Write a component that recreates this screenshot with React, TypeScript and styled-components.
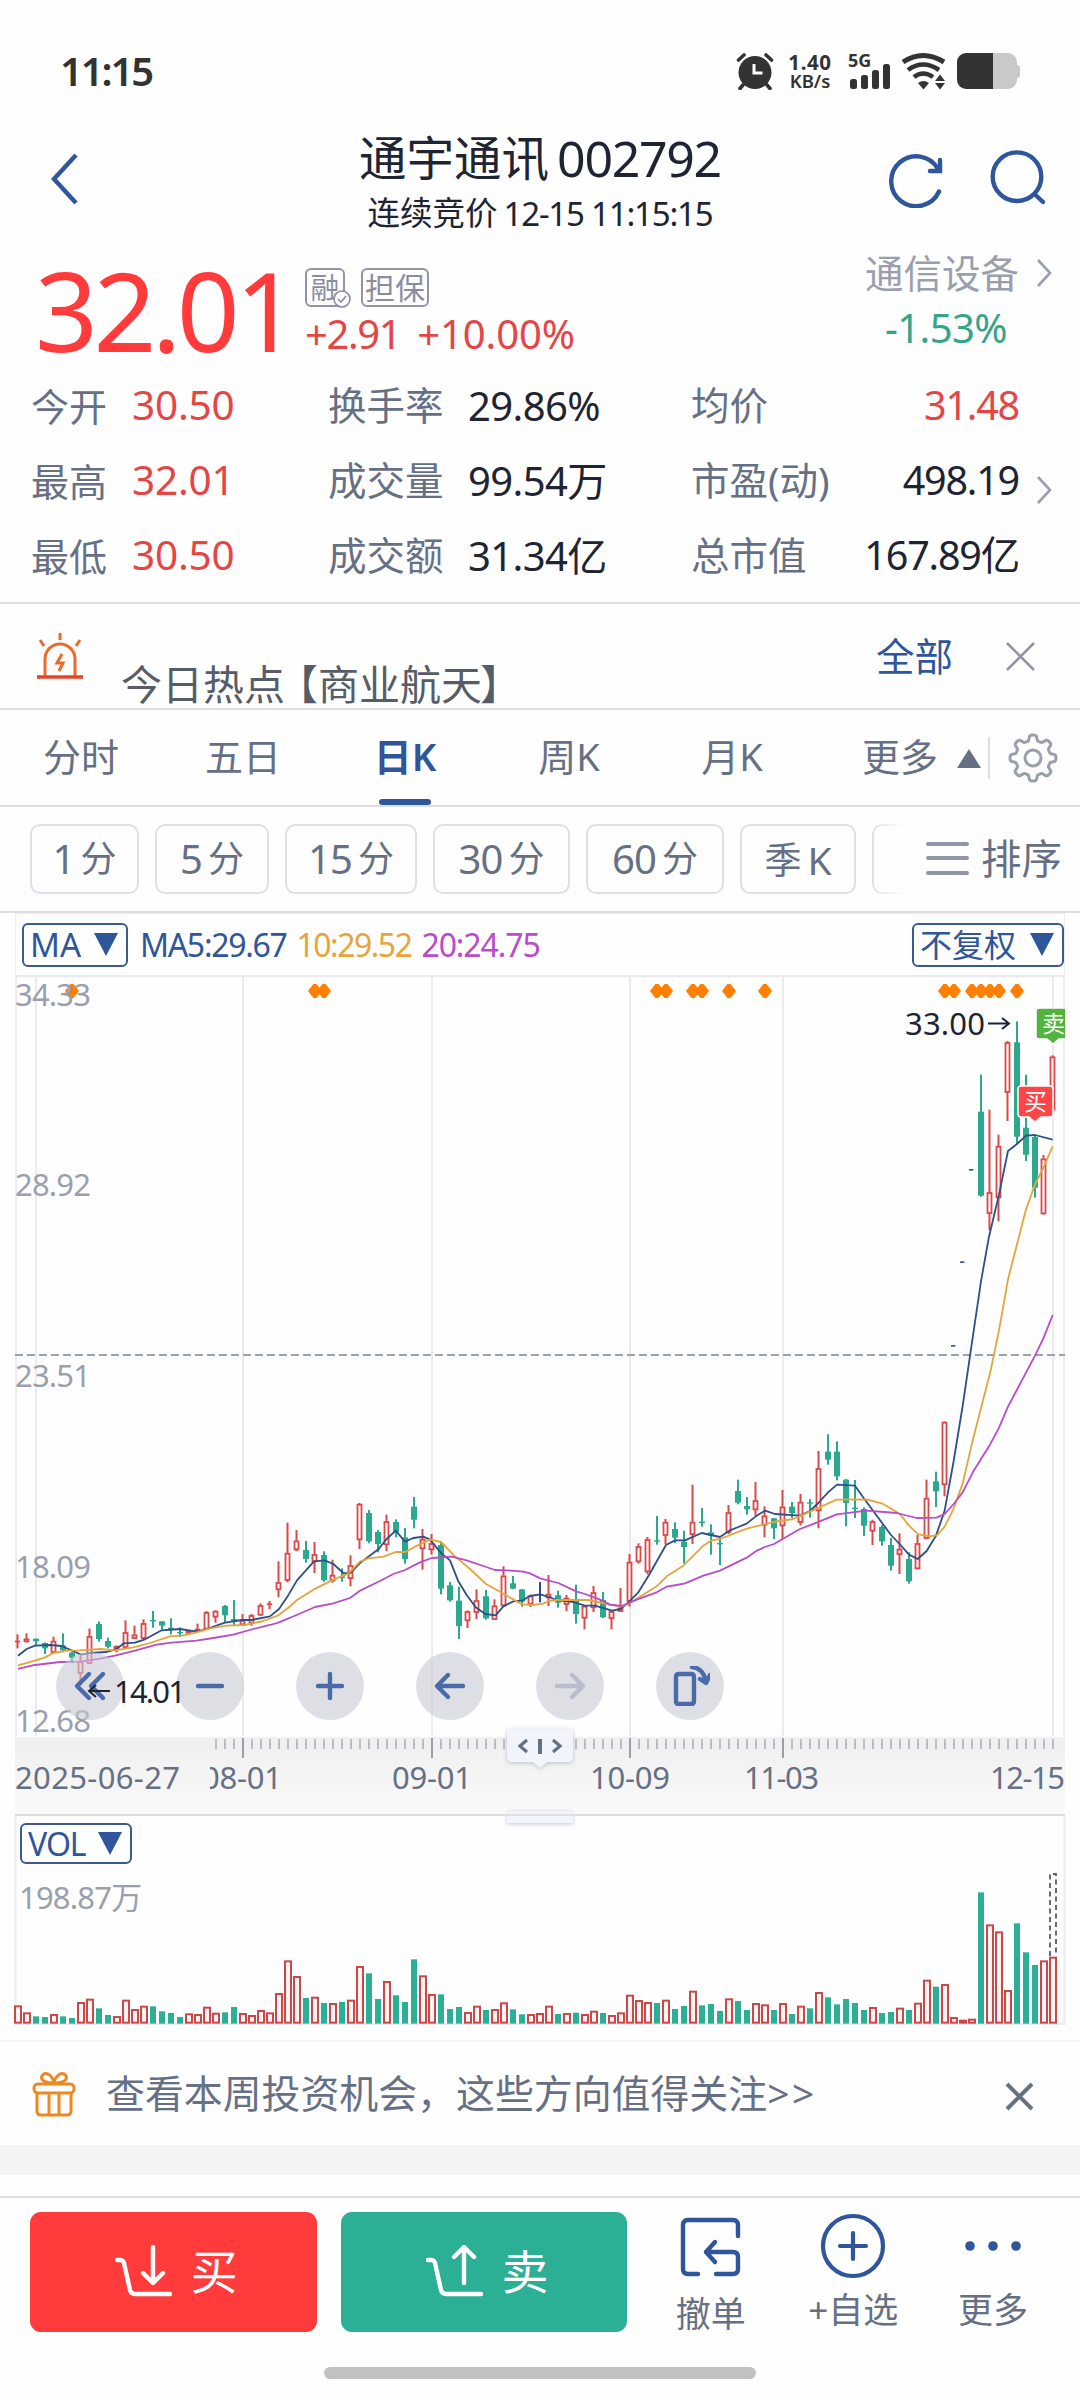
import React from "react";
import styled, { createGlobalStyle, css } from "styled-components";

const C = {
  ink: "#1f2433",
  label: "#667085",
  mute: "#9a9fae",
  blue: "#2f559b",
  red: "#e64545",
  hot: "#ff3b3b",
  green: "#2bb096",
  gold: "#e5a53a",
  violet: "#b84ccb",
  line: "#dcdee2",
  grid: "#ebebef",
};

const Global = createGlobalStyle`
  * { box-sizing: border-box; }
  body { margin: 0; background: #fff; }
`;

const Screen = styled.div`
  width: 1080px;
  height: 2400px;
  overflow: hidden;
  display: flex;
  flex-direction: column;
  background: #fefefe;
  color: ${C.ink};
  font-family: "Noto Sans", "Noto Sans CJK SC", sans-serif;
  line-height: 1;
  white-space: nowrap;
`;

const Txt = styled.span<{ $s: number; $c?: string; $ls?: number; $w?: number }>`
  display: block;
  font-size: ${(p) => p.$s}px;
  color: ${(p) => p.$c ?? "inherit"};
  letter-spacing: ${(p) => p.$ls ?? 0}px;
  font-weight: ${(p) => p.$w ?? 400};
  line-height: 1;
`;
const Tight = styled.span<{ $ls: number }>`
  letter-spacing: ${(p) => p.$ls}px;
`;

/* ---------- status bar ---------- */
const Status = styled.div`
  height: 110px;
  padding: 32px 60px 0 60px;
  display: flex;
  align-items: center;
  color: #333;
`;
const StatusIcons = styled.div`
  margin-left: auto;
  display: flex;
  align-items: center;
`;
const Speed = styled.div`
  width: 48px;
  margin: 0 14px 0 11px;
  display: flex;
  flex-direction: column;
  align-items: center;
`;
const Signal = styled.div`
  width: 44px;
  margin-right: 9px;
  height: 38px;
`;
const Battery = styled.div`
  display: flex;
  align-items: center;
  margin-left: 10px;
  &::before {
    content: "";
    width: 60px;
    height: 36px;
    border-radius: 9px;
    background: linear-gradient(90deg, #333 36px, #c9c9c9 36px);
  }
  &::after {
    content: "";
    width: 3px;
    height: 13px;
    border-radius: 0 3px 3px 0;
    background: #c9c9c9;
  }
`;

/* ---------- header ---------- */
const Header = styled.header`
  height: 138px;
  padding: 0 33px 0 33px;
  display: grid;
  grid-template-columns: 160px 1fr 160px;
  align-items: center;
`;
const Back = styled.div`
  padding-left: 17px;
`;
const TitleBlock = styled.div`
  display: flex;
  flex-direction: column;
  align-items: center;
  gap: 14px;
  padding-top: 5px;
`;
const Inline = styled.div<{ $gap?: number }>`
  display: flex;
  align-items: center;
  gap: ${(p) => p.$gap ?? 0}px;
`;
const HeaderActions = styled.div`
  display: flex;
  justify-content: flex-end;
  align-items: center;
  gap: 44px;
`;

/* ---------- quote ---------- */
const Quote = styled.section`
  height: 120px;
  padding: 0 28px 0 35px;
  display: flex;
  align-items: flex-start;
`;
const Price = styled.div`
  width: 270px;
  padding-top: 6px;
`;
const ChangeBlock = styled.div`
  padding-top: 20px;
  display: flex;
  flex-direction: column;
  gap: 7px;
`;
const Badge = styled.div<{ $w: number }>`
  position: relative;
  width: ${(p) => p.$w}px;
  height: 39px;
  border: 2px solid #9394a8;
  border-radius: 6px;
  display: flex;
  align-items: center;
  justify-content: center;
`;
const BadgeCheck = styled.svg`
  position: absolute;
  right: -8px;
  bottom: -3px;
`;
const Sector = styled.div`
  margin-left: auto;
  padding-top: 6px;
  display: flex;
  flex-direction: column;
  gap: 15px;
`;
const SectorChange = styled.div`
  padding-left: 20px;
`;

/* ---------- statistics ---------- */
const Stats = styled.section`
  height: 236px;
  border-bottom: 2px solid ${C.line};
  padding-left: 31px;
  padding-right: 28px;
  display: grid;
  grid-template-columns: 101px 196px 140px 223px 328px 1fr;
  grid-template-rows: repeat(3, 75px);
  align-items: center;
`;
const Right = styled.div`
  display: flex;
  align-items: center;
  justify-content: space-between;
`;
const RowArrow = styled.div`
  display: flex;
  justify-content: flex-end;
  padding-top: 18px;
`;

/* ---------- alert ---------- */
const Alert = styled.section`
  height: 106px;
  border-bottom: 2px solid ${C.line};
  padding: 0 45px 0 36px;
  display: flex;
  align-items: center;
`;
const AlertText = styled.div`
  margin: 66px 0 0 37px;
  height: 50px;
`;
const AlertEnd = styled.div`
  margin-left: auto;
  display: flex;
  align-items: center;
  gap: 53px;
`;

/* ---------- tabs ---------- */
const Tabs = styled.nav`
  height: 97px;
  border-bottom: 2px solid ${C.line};
  display: grid;
  grid-template-columns: 162px 162px 162px 166px 160px 176px 1fr;
  align-items: stretch;
`;
const Tab = styled.div<{ $on?: boolean; $end?: boolean }>`
  display: flex;
  justify-content: ${(p) => (p.$end ? "flex-end" : "center")};
  align-items: center;
  gap: 19px;
  padding: 0 ${(p) => (p.$end ? 7 : 0)}px 3px 0;
  font-size: 38px;
  color: ${(p) => (p.$on ? C.blue : C.label)};
  font-weight: ${(p) => (p.$on ? 600 : 400)};
  ${(p) =>
    p.$on &&
    css`
      flex-direction: column;
      justify-content: flex-end;
      gap: 24px;
      padding: 0;
      &::after {
        content: "";
        width: 52px;
        height: 6px;
        border-radius: 3px;
        background: ${C.blue};
      }
    `}
`;
const GearCell = styled.div`
  display: flex;
  align-items: center;
  &::before {
    content: "";
    width: 2px;
    height: 42px;
    background: ${C.line};
    margin-right: 18px;
  }
`;

/* ---------- periods ---------- */
const Periods = styled.div`
  height: 106px;
  border-bottom: 2px solid ${C.line};
  padding-left: 30px;
  display: flex;
  align-items: center;
  gap: 16px;
`;
const Chip = styled.div<{ $w: number }>`
  flex: none;
  width: ${(p) => p.$w}px;
  height: 70px;
  border: 2px solid #dfe0e5;
  border-radius: 10px;
  display: flex;
  align-items: center;
  justify-content: center;
  gap: 6px;
  color: ${C.label};
`;
const FadedChip = styled.div`
  width: 32px;
  height: 70px;
  overflow: hidden;
  border: 2px solid #dfe0e5;
  border-right: 0;
  border-radius: 10px 0 0 10px;
  mask-image: linear-gradient(90deg, #000, transparent);
`;
const Sort = styled.div`
  margin-left: 6px;
  display: flex;
  align-items: center;
  gap: 12px;
`;

/* ---------- chart ---------- */
const ChartHead = styled.div`
  height: 62px;
  margin: 0 15px;
  padding: 0 0 0 6px;
  border: 1px solid ${C.grid};
  border-bottom: 0;
  display: flex;
  align-items: center;
`;
const Select = styled.div<{ $w: number; $h: number }>`
  width: ${(p) => p.$w}px;
  height: ${(p) => p.$h}px;
  border: 2px solid #3c5a8c;
  border-radius: 6px;
  padding: 0 8px 0 6px;
  display: flex;
  align-items: center;
  justify-content: space-between;
  color: ${C.blue};
`;
const Averages = styled.div`
  margin: 0 auto 0 12px;
  display: flex;
  gap: 10px;
`;
const Plot = styled.div`
  position: relative;
  height: 762px;
  & > svg {
    display: block;
  }
`;
const Controls = styled.div`
  position: absolute;
  left: 56px;
  top: 677px;
  display: flex;
  gap: 52px;
`;
const Round = styled.div`
  width: 68px;
  height: 68px;
  border-radius: 50%;
  background: rgba(200, 202, 212, 0.6);
  display: flex;
  align-items: center;
  justify-content: center;
`;
const PriceTag = styled.div<{ $x: number; $y: number; $w: number }>`
  position: absolute;
  left: ${(p) => p.$x}px;
  top: ${(p) => p.$y}px;
  width: ${(p) => p.$w}px;
  overflow: hidden;
`;
const TagSvg = styled.svg`
  display: block;
`;
const Axis = styled.div`
  position: relative;
  height: 77px;
  margin: 0 15px;
  background: linear-gradient(#efefef, #fafafa);
  & > svg {
    display: block;
  }
`;
const Handle = styled.svg`
  position: absolute;
  left: 485px;
  top: -14px;
`;
const VolumeBox = styled.div`
  position: relative;
  height: 226px;
  margin: 0 15px;
  border-top: 2px solid ${C.line};
`;
const VolumeHead = styled.div`
  height: 60px;
  padding: 7px 0 0 5px;
`;
const VolumeLabel = styled.div`
  padding: 6px 0 0 4px;
`;
const VolumeSvg = styled.svg`
  position: absolute;
  left: -15px;
  top: 0;
`;

/* ---------- promo & footer ---------- */
const Promo = styled.div`
  height: 105px;
  border-top: 2px solid #f3f3f5;
  padding: 0 46px 0 32px;
  display: flex;
  align-items: center;
`;
const PromoText = styled.div`
  margin: 0 auto 0 30px;
`;
const PromoClose = styled.svg`
  margin-top: 6px;
`;
const Band = styled.div`
  height: 30px;
  background: #f3f4f6;
`;
const Footer = styled.footer`
  margin-top: 21px;
  border-top: 2px solid ${C.line};
  height: 170px;
  padding: 14px 30px 0;
  display: flex;
  align-items: flex-start;
`;
const Trade = styled.button<{ $bg: string }>`
  width: 287px;
  height: 120px;
  border: 0;
  padding: 0 0 1px 6px;
  margin-right: 24px;
  border-radius: 11px;
  background: ${(p) => p.$bg};
  color: #fff;
  font-family: inherit;
  display: flex;
  align-items: center;
  justify-content: center;
  gap: 18px;
`;
const Action = styled.div<{ $w: number; $t?: number }>`
  width: ${(p) => p.$w}px;
  display: flex;
  flex-direction: column;
  align-items: center;
  gap: ${(p) => p.$t ?? 13}px;
`;
const HomeBar = styled.div`
  width: 432px;
  height: 12px;
  border-radius: 6px;
  background: #c1c1c1;
  margin: 1px auto 0;
`;

/* Candles: colour, high, body top, body bottom, low, in thirds of a pixel. */
type Candle = [string, number, number, number, number];
const candles: Candle[] = [
  ["r", 466, 485, 489, 508], ["r", 463, 479, 488, 490], ["g", 479, 479, 487, 500], ["g", 490, 492, 508, 525],
  ["r", 473, 486, 520, 522], ["g", 463, 499, 514, 520], ["g", 518, 521, 536, 552], ["r", 530, 547, 583, 620],
  ["r", 449, 472, 553, 555], ["g", 427, 435, 480, 488], ["g", 476, 486, 503, 508], ["r", 500, 501, 509, 520],
  ["r", 424, 460, 505, 507], ["r", 440, 467, 478, 480], ["r", 421, 433, 478, 480], ["g", 396, 423, 427, 446],
  ["g", 427, 427, 440, 452], ["g", 418, 446, 452, 466], ["g", 445, 459, 463, 474], ["r", 454, 456, 462, 466],
  ["r", 434, 450, 456, 458], ["r", 396, 400, 450, 452], ["r", 394, 396, 414, 431], ["g", 378, 381, 409, 430],
  ["g", 363, 420, 428, 438], ["r", 405, 424, 437, 440], ["r", 405, 409, 432, 440], ["r", 373, 379, 408, 410],
  ["r", 366, 373, 377, 391], ["r", 247, 310, 332, 355], ["r", 131, 222, 304, 310], ["r", 153, 185, 212, 217],
  ["g", 186, 213, 240, 251], ["r", 189, 226, 248, 282], ["g", 217, 228, 304, 308], ["r", 242, 288, 305, 311],
  ["g", 268, 292, 297, 308], ["r", 229, 259, 298, 322], ["r", 72, 75, 182, 210], ["g", 93, 102, 187, 193],
  ["g", 153, 159, 195, 220], ["r", 107, 127, 197, 216], ["g", 121, 129, 159, 175], ["g", 147, 175, 240, 254],
  ["g", 54, 83, 122, 148], ["r", 150, 180, 209, 272], ["r", 165, 193, 212, 227], ["g", 190, 198, 329, 346],
  ["g", 309, 319, 364, 368], ["g", 323, 365, 441, 480], ["r", 394, 397, 425, 447], ["r", 331, 364, 400, 420],
  ["g", 333, 352, 418, 422], ["r", 361, 380, 421, 423], ["r", 262, 290, 380, 382], ["g", 291, 313, 329, 330],
  ["g", 330, 331, 368, 383], ["r", 347, 350, 375, 384], ["b", 309, 345, 349, 370], ["r", 288, 345, 356, 381],
  ["g", 335, 349, 371, 386], ["r", 348, 357, 376, 396], ["g", 317, 365, 405, 434], ["r", 378, 381, 417, 451],
  ["r", 321, 340, 386, 399], ["g", 339, 363, 415, 417], ["r", 395, 397, 418, 451], ["r", 327, 386, 397, 399],
  ["r", 225, 249, 367, 383], ["r", 193, 202, 248, 254], ["r", 174, 181, 278, 286], ["g", 111, 184, 188, 197],
  ["r", 120, 129, 169, 196], ["g", 130, 150, 176, 192], ["g", 155, 188, 204, 254], ["r", 17, 129, 166, 195],
  ["g", 87, 128, 132, 143], ["g", 136, 160, 170, 227], ["g", 180, 192, 196, 258], ["r", 78, 100, 160, 165],
  ["g", 2, 36, 71, 76], ["g", 54, 81, 91, 107], ["r", 9, 64, 92, 110], ["r", 82, 110, 138, 175],
  ["g", 117, 118, 148, 180], ["r", 33, 83, 140, 180], ["g", 69, 83, 102, 117], ["r", 45, 69, 130, 139],
  ["g", 60, 70, 74, 116], ["r", -84, -32, 95, 148], ["g", -134, -82, -58, -43], ["g", -113, -82, -8, 4],
  ["g", 0, 2, 72, 142], ["g", 3, 86, 90, 117], ["g", 85, 90, 140, 171], ["r", 122, 127, 156, 198],
  ["g", 138, 144, 187, 200], ["g", 177, 198, 260, 275], ["r", 163, 210, 226, 285], ["g", 220, 240, 307, 314],
  ["r", 167, 193, 269, 271], ["r", 2, 57, 178, 180], ["g", -22, 7, 37, 84], ["r", -173, -171, 17, 52],
  ["d", -399, -399, -399, -399], ["d", -650, -650, -650, -650], ["d", -927, -927, -927, -927],
  ["g", -1213, -1102, -850, -847], ["r", -1108, -860, -797, -746], ["r", -1033, -999, -844, -773],
  ["r", -1314, -1310, -1160, -1074], ["g", -1373, -1310, -1027, -1005], ["g", -1213, -1054, -973, -954],
  ["g", -1033, -1026, -874, -844], ["r", -972, -961, -796, -793], ["r", -1271, -1267, -1107, -1105],
];

const ma5 =
  "54,530 80,510 105,500 150,498 185,501 243,527 270,522 320,519 348,511 372,493 405,491 435,481 485,454 540,450 590,458 620,450 675,431 725,423 755,423 810,412 837,390 864,350 891,304 942,247 974,244 1000,255 1030,282 1050,283 1080,252 1135,211 1160,180 1187,155 1215,188 1240,177 1270,173 1290,182 1325,224 1350,244 1375,307 1400,348 1427,385 1456,405 1487,409 1510,382 1540,367 1568,364 1590,351 1620,346 1647,354 1670,363 1720,369 1755,380 1785,380 1836,395 1862,390 1885,370 1915,340 1947,288 1998,198 2025,184 2055,184 2105,162 2160,174 2190,154 2215,144 2240,134 2270,110 2295,95 2325,105 2400,110 2430,96 2455,72 2484,40 2511,17 2565,20 2591,57 2673,168 2696,192 2727,227 2753,240 2780,216 2808,170 2834,95 2861,-54 2888,-219 2915,-403 2943,-593 2967,-727 2997,-853 3024,-984 3051,-1005 3078,-1030 3105,-1032 3158,-1018";
const ma10 =
  "54,559 105,545 135,535 160,522 200,515 240,514 300,510 345,514 400,505 450,492 510,472 545,470 590,460 630,448 680,440 735,438 790,426 835,409 864,387 891,363 940,332 1000,302 1045,284 1080,248 1105,238 1150,233 1187,219 1217,219 1245,203 1290,182 1323,189 1365,232 1410,270 1458,315 1500,338 1565,376 1600,378 1630,374 1645,366 1670,363 1765,363 1835,378 1865,382 1885,375 1970,322 2000,292 2050,260 2110,200 2135,184 2160,180 2240,149 2320,129 2380,120 2430,98 2510,62 2600,61 2645,73 2675,90 2700,105 2727,140 2755,166 2790,172 2812,168 2834,143 2861,89 2888,13 2915,-103 2943,-213 2970,-317 2997,-446 3024,-599 3078,-809 3105,-883 3131,-936 3158,-998";
const ma20 =
  "54,570 105,558 180,549 240,548 300,539 345,530 405,515 470,497 515,491 590,485 640,477 700,467 760,450 810,438 837,430 890,408 945,384 1000,373 1050,357 1080,335 1140,306 1180,285 1215,273 1260,250 1295,237 1355,233 1400,244 1450,261 1485,273 1520,274 1570,278 1590,283 1620,298 1675,312 1730,338 1755,345 1800,362 1830,377 1865,381 1910,362 1970,340 2000,323 2030,318 2055,313 2110,290 2160,275 2240,236 2270,215 2295,204 2322,195 2400,150 2450,131 2510,106 2600,95 2690,102 2750,117 2810,116 2834,105 2861,75 2888,40 2920,-23 2970,-103 2997,-154 3024,-217 3080,-323 3105,-370 3131,-424 3158,-492";

/* Volume bar tops in thirds of a pixel below the panel top; the base is 672. */
const volumes =
  "r620 r641 g652 g654 r646 g652 g657 r610 r600 g628 g648 r652 r603 r631 r621 g622 g637 g642 g654 r644 r646 r624 r642 g640 g624 r643 r649 r634 r641 r583 r485 r532 g597 r594 g612 r613 g609 r603 r502 g523 g600 r547 g589 g609 g481 r530 r586 g586 g630 g624 r640 r621 g633 r631 r611 g631 g646 r646 r643 r621 g645 r643 g641 r646 r636 g642 r649 r641 r588 r604 r610 g612 r603 g630 g621 r576 g619 g615 g636 r599 g606 g633 r613 r617 g633 r613 g645 r621 g628 r580 g595 g616 g600 g612 g633 r625 g642 g639 r627 g633 r612 r543 g563 r556 r655 r663 r660 g280 r377 r398 r574 g373 g460 g498 r485 r474".split(
    " "
  );

const months = [243, 432, 630, 783];
const eventDays = [6, 33, 34, 71, 72, 75, 76, 79, 83, 103, 104, 106, 107, 108, 109, 111];
const scaleLabels: [string, number][] = [
  ["34.33", 31], ["28.92", 221], ["23.51", 412], ["18.09", 603], ["12.68", 757],
];
const dates: [string, number][] = [
  ["09-01", 392], ["10-09", 590], ["11-03", 744], ["12-15", 990],
];
const svgText = { fontFamily: '"Noto Sans", sans-serif' };

const CandleMark = ({ c, i }: { c: Candle; i: number }) => {
  const [k, hi, top, bot, lo] = c;
  const x = 54 + 27 * i;
  if (k === "d") return <rect x={x - 9} y={hi - 3} width={13} height={5} fill={C.blue} />;
  if (k === "r") {
    const rx = x - 1.5;
    if (bot - top < 6)
      return (
        <g fill={C.red}>
          <rect x={rx - 3} y={hi} width={6} height={lo - hi} />
          <rect x={rx - 8} y={top} width={16} height={5} />
        </g>
      );
    return (
      <g fill="#dc4848">
        <rect x={rx - 3} y={hi} width={6} height={Math.max(0, top - hi)} />
        <rect x={rx - 3} y={bot} width={6} height={Math.max(0, lo - bot)} />
        <rect x={rx - 6} y={top + 2} width={12} height={Math.max(2, bot - top - 3)} fill="none" stroke="#dc4848" strokeWidth={5.4} />
      </g>
    );
  }
  const f = k === "b" ? "#2b4c83" : "#2aa98f";
  return (
    <g fill={f}>
      <rect x={x - 3} y={hi} width={6} height={lo - hi} />
      <rect x={x - 9} y={top} width={18} height={bot - top} />
    </g>
  );
};

const Chevron = () => (
  <svg width="15" height="28" viewBox="0 0 15 28" fill="none" stroke="#9a9fae" strokeWidth="2.6">
    <path d="M1 1 13 14 1 27" />
  </svg>
);
const Caret = ({ up, color = C.blue }: { up?: boolean; color?: string }) => (
  <svg width="24" height="24" viewBox="0 0 24 24">
    <path d={up ? "M12 5 24 24H0Z" : "M0 0H24L12 23Z"} fill={color} />
  </svg>
);
const TagShape = ({ fill, children }: { fill: string; children: string }) => (
  <TagSvg width="37" height="40" viewBox="0 0 37 40">
    <path d="M4 1H33Q36 1 36 4V29Q36 32 33 32H24L18 37 12 32H4Q1 32 1 29V4Q1 1 4 1Z" fill={fill} stroke="#fff" strokeWidth="1.5" />
    <text x="18.5" y="25" fontSize="23" textAnchor="middle" fill="#fff" fontFamily='"Noto Sans CJK SC", sans-serif'>
      {children}
    </text>
  </TagSvg>
);

const Stroke = ({ d, color = "#4a6ba8" }: { d: string; color?: string }) => (
  <svg width="40" height="40" viewBox="0 0 40 40" fill="none" stroke={color} strokeWidth="4.4" strokeLinecap="round" strokeLinejoin="round">
    <path d={d} />
  </svg>
);

const gearPath = (() => {
  const pts: string[] = [];
  for (let a = 0; a <= 360; a += 3) {
    const t = (a * Math.PI) / 180;
    const w = Math.cos(8 * t);
    const r = 20.2 + 2.8 * Math.tanh(2.4 * w);
    pts.push(`${(25 + r * Math.sin(t)).toFixed(2)} ${(25 - r * Math.cos(t)).toFixed(2)}`);
  }
  return "M" + pts.join("L") + "Z";
})();

const stats: [string, string, string, string, string, string][] = [
  ["今开", "30.50", "换手率", "29.86%", "均价", "31.48"],
  ["最高", "32.01", "成交量", "99.54万", "市盈(动)", "498.19"],
  ["最低", "30.50", "成交额", "31.34亿", "总市值", "167.89亿"],
];
const chips: [string, string, number][] = [
  ["1", "分", 109], ["5", "分", 114], ["15", "分", 132], ["30", "分", 137], ["60", "分", 138],
];

export default function App() {
  return (
    <Screen>
      <Global />
      <Status>
        <Txt $s={40} $w={600} $ls={-2.1}>11:15</Txt>
        <StatusIcons>
          <svg width="40" height="38" viewBox="0 0 40 38">
            <circle cx="20" cy="20.5" r="16.5" fill="#333" />
            <path d="M3.500 8 9 3M36.500 8 31 3M8 33 5 36.500M32 33 35 36.500" stroke="#333" strokeWidth="3.6" strokeLinecap="round" />
            <path d="M19 12V21H27.500" fill="none" stroke="#fff" strokeWidth="3" />
          </svg>
          <Speed>
            <Txt $s={20.5} $w={700} $ls={0.6}>1.40</Txt>
            <Txt $s={18.5} $w={600}>KB/s</Txt>
          </Speed>
          <Signal>
            <svg width="44" height="38" viewBox="0 0 44 38">
              <text x="0" y="15" fontSize="18" fontWeight="700" fill="#333" style={svgText}>5G</text>
              <g fill="#333">
                <rect x="2" y="27" width="7" height="10" rx="2.5" />
                <rect x="13" y="23" width="7" height="14" rx="2.5" />
                <rect x="24" y="18" width="7" height="19" rx="2.5" />
                <rect x="35" y="12" width="7" height="25" rx="2.5" />
              </g>
            </svg>
          </Signal>
          <svg width="46" height="38" viewBox="0 0 46 38" fill="none" stroke="#333">
            <path d="M2 10Q22 -3 43 10" strokeWidth="5" />
            <path d="M7 18Q22 7 38 18" strokeWidth="4.6" />
            <path d="M13 25Q22 18 32 25" strokeWidth="4.4" />
            <path d="M17 31Q22.500 27 28 31L22.500 37.500ZM34 31H44L39 37.500ZM34 29H44L39 22.500Z" fill="#333" stroke="none" />
          </svg>
          <Battery />
        </StatusIcons>
      </Status>

      <Header>
        <Back>
          <svg width="30" height="54" viewBox="0 0 30 54" fill="none" stroke={C.blue} strokeWidth="4.4">
            <path d="M26 4 4 28 26 52" />
          </svg>
        </Back>
        <TitleBlock>
          <Inline $gap={8}>
            <Txt $s={47.5}>通宇通讯</Txt>
            <Txt $s={50} $ls={-1.3}>002792</Txt>
          </Inline>
          <Inline $gap={6}>
            <Txt $s={32.5}>连续竞价</Txt>
            <Txt $s={33} $ls={-1.2}>12-15 11:15:15</Txt>
          </Inline>
        </TitleBlock>
        <HeaderActions>
          <svg width="58" height="58" viewBox="0 0 58 58" fill="none" stroke={C.blue} strokeWidth="4.4" strokeLinecap="round">
            <path d="M52 41.500A25 25 0 1 1 51 19" />
            <path d="M53 10V21H43" />
          </svg>
          <svg width="58" height="58" viewBox="0 0 58 58" fill="none" stroke={C.blue} strokeWidth="4.400" strokeLinecap="round">
            <circle cx="28" cy="26.700" r="24.300" />
            <path d="M46 44.500 54 52" />
          </svg>
        </HeaderActions>
      </Header>

      <Quote>
        <Price>
          <Txt $s={110} $c={C.hot} $ls={-4.5}>32.01</Txt>
        </Price>
        <ChangeBlock>
          <Inline $gap={16}>
            <Badge $w={40}>
              <Txt $s={29} $c="#8b8ca2">融</Txt>
              <BadgeCheck width="18" height="18" viewBox="0 0 18 18" fill="#fff" stroke="#8b8ca2" strokeWidth="1.6">
                <circle cx="9" cy="9" r="8" />
                <path d="M5 9 8 12 13 6" fill="none" />
              </BadgeCheck>
            </Badge>
            <Badge $w={68}>
              <Txt $s={30} $c="#8b8ca2">担保</Txt>
            </Badge>
          </Inline>
          <Inline $gap={17}>
            <Txt $s={40} $c={C.red} $ls={-1.4}>+2.91</Txt>
            <Txt $s={40} $c={C.red} $ls={-0.1}>+10.00%</Txt>
          </Inline>
        </ChangeBlock>
        <Sector>
          <Inline $gap={18}>
            <Txt $s={38.5} $c={C.mute}>通信设备</Txt>
            <Chevron />
          </Inline>
          <SectorChange>
            <Txt $s={40} $c="#35a58a" $ls={-0.6}>-1.53%</Txt>
          </SectorChange>
        </Sector>
      </Quote>

      <Stats>
        {stats.map((r, i) => (
          <React.Fragment key={r[0]}>
            <Txt $s={38} $c={C.label}>{r[0]}</Txt>
            <Txt $s={40.5} $c={C.red} $ls={-0.2}>{r[1]}</Txt>
            <Txt $s={38.5} $c={C.label}>{r[2]}</Txt>
            <Txt $s={40} $ls={-0.6}>{r[3]}</Txt>
            <Right>
              <Txt $s={38.5} $c={C.label}>{r[4]}</Txt>
              <Txt $s={39.5} $ls={-1.2} $c={i === 0 ? C.red : C.ink}>{r[5]}</Txt>
            </Right>
            <RowArrow>{i === 1 && <Chevron />}</RowArrow>
          </React.Fragment>
        ))}
      </Stats>

      <Alert>
        <svg width="48" height="48" viewBox="0 0 48 48" fill="none" stroke="#ec6a2c" strokeWidth="3">
          <path d="M24 1V8M4 8 8 14M44 8 40 14" />
          <path d="M9 44V27A15 15 0 0 1 39 27V44" />
          <path d="M1 45H47" stroke="#e4452a" strokeWidth="3.400" />
          <path d="M26 22 21 31H27L23 39" />
        </svg>
        <AlertText>
          <Txt $s={41} $c="#565c68">
            今日热<Tight $ls={-8}>点</Tight><Tight $ls={0}>【商业航</Tight><Tight $ls={-2}>天</Tight>】
          </Txt>
        </AlertText>
        <AlertEnd>
          <Txt $s={38.500} $c={C.blue}>全部</Txt>
          <svg width="29" height="29" viewBox="0 0 29 29" stroke="#8f94a5" strokeWidth="2.600">
            <path d="M1 1 28 28M28 1 1 28" />
          </svg>
        </AlertEnd>
      </Alert>

      <Tabs>
        <Tab>分时</Tab>
        <Tab>五日</Tab>
        <Tab $on>日K</Tab>
        <Tab>周K</Tab>
        <Tab>月K</Tab>
        <Tab $end>
          更多
          <Caret up color="#667085" />
        </Tab>
        <GearCell>
          <svg width="50" height="50" viewBox="0 0 50 50" fill="none" stroke="#9a9fae" strokeWidth="3">
            <path d={gearPath} />
            <circle cx="25" cy="25" r="8" />
          </svg>
        </GearCell>
      </Tabs>

      <Periods>
        {chips.map(([n, u, w]) => (
          <Chip key={n} $w={w}>
            <Txt $s={40} $ls={-1}>{n}</Txt>
            <Txt $s={36}>{u}</Txt>
          </Chip>
        ))}
        <Chip $w={116}>
          <Txt $s={37}>季</Txt>
          <Txt $s={39}>K</Txt>
        </Chip>
        <FadedChip />
        <Sort>
          <svg width="43" height="34" viewBox="0 0 43 34" stroke="#9197a6" strokeWidth="4" strokeLinecap="round">
            <path d="M2 2H41M2 16H41M2 31H41" />
          </svg>
          <Txt $s={40.500} $c={C.label}>排序</Txt>
        </Sort>
      </Periods>

      <ChartHead>
        <Select $w={106} $h={44}>
          <Txt $s={33}>MA</Txt>
          <Caret />
        </Select>
        <Averages>
          <Txt $s={32} $c={C.blue} $ls={-1.3}>MA5:29.67</Txt>
          <Txt $s={32} $c={C.gold} $ls={-1.5}>10:29.52</Txt>
          <Txt $s={32} $c={C.violet} $ls={-1.1}>20:24.75</Txt>
        </Averages>
        <Select $w={152} $h={44}>
          <Txt $s={32}>不复权</Txt>
          <Caret />
        </Select>
      </ChartHead>

      <Plot>
        <svg width="1080" height="762" viewBox="0 0 1080 762">
          <g stroke={C.grid} strokeWidth="2">
            <path d="M15 1H1065" strokeWidth="2.500" />
            {[16, 36, ...months, 1053, 1064].map((x) => (
              <path key={x} d={`M${x} 0V761`} />
            ))}
          </g>
          <path d="M15 380H1065" stroke="#97a3b0" strokeWidth="2" strokeDasharray="8 4" />
          {eventDays.map((i) => (
            <path key={i} transform={`translate(${18 + 9 * i} 16)`} d="M-7 0Q-6 -1.500 -1.500 -7H1.500Q6 -1.500 7 0 6 1.500 1.500 7H-1.500Q-6 1.500 -7 0Z" fill="#ff7f00" />
          ))}
          <g fontSize="31" fill={C.mute} style={svgText}>
            {scaleLabels.map(([t, y]) => (
              <text key={t} x="15" y={y} textLength="76">{t}</text>
            ))}
          </g>
          <g transform="translate(0 504) scale(.33333)">
            {candles.map((c, i) => (
              <CandleMark key={i} c={c} i={i} />
            ))}
            <g fill="none" strokeWidth="5.400" strokeLinejoin="round">
              <polyline points={ma5} stroke="#2d4f8a" />
              <polyline points={ma10} stroke={C.gold} />
              <polyline points={ma20} stroke={C.violet} />
            </g>
          </g>
        </svg>
        <Controls>
          <Round><Stroke d="M19 8 7 20 19 32M33 8 21 20 33 32" /></Round>
          <Round><Stroke d="M8 20H32" /></Round>
          <Round><Stroke d="M8 20H32M20 8V32" /></Round>
          <Round><Stroke d="M33 20H8M18 9 7 20 18 31" /></Round>
          <Round><Stroke d="M7 20H32M22 9 33 20 22 31" color="#b9bdcb" /></Round>
          <Round><Stroke d="M9 8H21Q24 8 24 11V35Q24 38 21 38H9Q6 38 6 35V11Q6 8 9 8ZM22 1Q33 2 36 15M30 13 36 17 40 9" /></Round>
        </Controls>
        <PriceTag $x={85} $y={700} $w={110}>
          <svg width="110" height="36" viewBox="0 0 110 36">
            <path d="M25 16H4M11 10 4 16 11 22" fill="none" stroke={C.ink} strokeWidth="2" />
            <text x="29" y="28" fontSize="31" fill={C.ink} textLength="72" style={svgText}>14.01</text>
          </svg>
        </PriceTag>
        <PriceTag $x={904} $y={32} $w={110}>
          <svg width="110" height="36" viewBox="0 0 110 36">
            <path d="M84 16.500H105M98 11 105 16.500 98 22" fill="none" stroke={C.ink} strokeWidth="2" />
            <text x="1" y="28" fontSize="31" fill={C.ink} textLength="80" style={svgText}>33.00</text>
          </svg>
        </PriceTag>
        <PriceTag $x={1035} $y={32} $w={30}><TagShape fill="#54b340">卖</TagShape></PriceTag>
        <PriceTag $x={1017} $y={110} $w={37}><TagShape fill="#ff4545">买</TagShape></PriceTag>
      </Plot>

      <Axis>
        <svg width="1050" height="77" viewBox="15 0 1050 77">
          <g stroke="#b9bec6" strokeWidth="2">
            {Array.from({ length: 94 }, (_, i) => 216 + 9 * i).map((x) => (
              <path key={x} d={`M${x} 2V12`} />
            ))}
            {months.map((x) => (
              <path key={x} d={`M${x} 1V21`} stroke="#98a0ac" />
            ))}
          </g>
          <g fontSize="31" fill={C.label} style={svgText}>
            <text x="15" y="52" textLength="165">2025-06-27</text>
            <svg x="210" y="20" width="80" height="40" viewBox="210 20 80 40">
              <text x="202" y="52" textLength="80">08-01</text>
            </svg>
            {dates.map(([t, x]) => (
              <text key={t} x={x} y="52" textLength={t === "12-15" || t === "11-03" ? 75 : 80}>{t}</text>
            ))}
          </g>
        </svg>
        <Handle width="80" height="114" viewBox="0 0 80 114">
          <defs>
            <filter id="soft" x="-20%" y="-20%" width="140%" height="150%">
              <feDropShadow dx="0" dy="1" stdDeviation="2" floodColor="#8a93a8" floodOpacity=".55" />
            </filter>
          </defs>
          <path d="M7 6H73V34Q73 39 68 39H47L40 45 33 39H12Q7 39 7 34Z" fill="#f1f4fb" filter="url(#soft)" />
          <path d="M27 17 20 23 27 29M53 17 60 23 53 29" fill="none" stroke="#667085" strokeWidth="3.200" />
          <path d="M40 16V31" stroke="#667085" strokeWidth="4" />
          <path d="M7 100V93Q7 88 12 88H68Q73 88 73 93V100Z" fill="#f1f4fb" filter="url(#soft)" />
        </Handle>
      </Axis>

      <VolumeBox>
        <VolumeSvg width="1080" height="224" viewBox="0 0 1080 224">
          <path d="M15.500 0V209M1064.500 0V209M15 208H1065" stroke={C.grid} strokeWidth="2" />
          <g transform="translate(0 -17) scale(.33333)">
            {volumes.map((v, i) => {
              const top = Number(v.slice(1));
              const x = 54 + 27 * i;
              return v[0] === "g" ? (
                <rect key={i} x={x - 9} y={top} width="18" height={674 - top} fill={C.green} />
              ) : (
                <rect key={i} x={x - 9} y={top + 2} width="18" height={669 - top} fill="#fff4f3" stroke="#cb4848" strokeWidth="6" />
              );
            })}
          </g>
          <path d="M1050 140V58H1056V140" fill="none" stroke="#555d6e" strokeWidth="1.800" strokeDasharray="5 3.500" />
          <path d="M508 0V6H573V0Z" fill="#f1f4fb" />
        </VolumeSvg>
        <VolumeHead>
          <Select $w={112} $h={41}>
            <Txt $s={32} $ls={-1}>VOL</Txt>
            <Caret />
          </Select>
        </VolumeHead>
        <VolumeLabel>
          <Txt $s={31} $c={C.mute} $ls={-0.8}>198.87万</Txt>
        </VolumeLabel>
      </VolumeBox>

      <Promo>
        <svg width="44" height="46" viewBox="0 0 44 46" fill="none" stroke="#ec8a22" strokeWidth="3">
          <rect x="2" y="13" width="40" height="9" rx="4" />
          <path d="M5 22V40Q5 44 9 44H35Q39 44 39 40V22M17 22V44M27 22V44" />
          <path d="M22 12C13 12 8 9 10 5C13 0 20 3 22 12C24 3 31 0 34 5C36 9 31 12 22 12Z" />
        </svg>
        <PromoText>
          <Txt $s={38.900} $c={C.label}>
            查看本周投资机会，这些方向值得关注<Tight $ls={2.5}>{">>"}</Tight>
          </Txt>
        </PromoText>
        <PromoClose width="29" height="29" viewBox="0 0 29 29" stroke="#667085" strokeWidth="4">
          <path d="M2 2 27 27M27 2 2 27" />
        </PromoClose>
      </Promo>
      <Band />

      <Footer>
        <Trade $bg="#ff3b3b">
          <svg width="58" height="54" viewBox="0 0 58 54" fill="none" stroke="#fff" strokeWidth="4.400" strokeLinecap="round" strokeLinejoin="round">
            <path d="M2 15H5Q8 15 9 18L15 45Q16 49 20 49H55" />
            <path d="M38 2V38M28 28 38 38 48 28" />
          </svg>
          <Txt $s={47}>买</Txt>
        </Trade>
        <Trade $bg={C.green}>
          <svg width="58" height="54" viewBox="0 0 58 54" fill="none" stroke="#fff" strokeWidth="4.400" strokeLinecap="round" strokeLinejoin="round">
            <path d="M2 15H5Q8 15 9 18L15 45Q16 49 20 49H55" />
            <path d="M38 38V2M28 12 38 2 48 12" />
          </svg>
          <Txt $s={47}>卖</Txt>
        </Trade>
        <Action $w={119} $t={18}>
          <svg width="62" height="66" viewBox="0 0 62 66" fill="none" stroke={C.blue} strokeWidth="4.400" strokeLinecap="round" strokeLinejoin="round">
            <path d="M58 24V13Q58 8 53 8H8Q3 8 3 13V57Q3 62 8 62H18" />
            <path d="M36 62H53Q58 62 58 57V45Q58 40 53 40H26M35 30 26 40 35 50" />
          </svg>
          <Txt $s={35} $c={C.label}>撤单</Txt>
        </Action>
        <Action $w={166} $t={12}>
          <svg width="66" height="68" viewBox="0 0 66 68" fill="none" stroke={C.blue} strokeWidth="4.200" strokeLinecap="round">
            <circle cx="33" cy="34" r="30" />
            <path d="M20 34H46M33 21V47" />
          </svg>
          <Txt $s={35} $c={C.label}>+自选</Txt>
        </Action>
        <Action $w={114} $t={12}>
          <svg width="58" height="68" viewBox="0 0 58 68" fill={C.blue}>
            <circle cx="6" cy="34" r="4.800" />
            <circle cx="29" cy="34" r="4.800" />
            <circle cx="52" cy="34" r="4.800" />
          </svg>
          <Txt $s={35} $c={C.label}>更多</Txt>
        </Action>
      </Footer>
      <HomeBar />
    </Screen>
  );
}
